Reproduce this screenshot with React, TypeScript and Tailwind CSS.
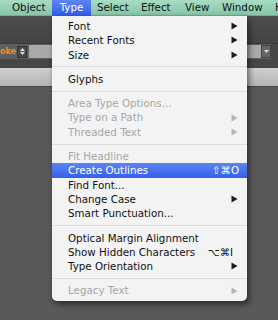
import React from "react";

type Item =
  | { kind: "sep" }
  | { kind: "item"; label: string; disabled?: boolean; arrow?: boolean; shortcut?: string; active?: boolean; scPad?: string };

const items: Item[] = [
  { kind: "item", label: "Font", arrow: true },
  { kind: "item", label: "Recent Fonts", arrow: true },
  { kind: "item", label: "Size", arrow: true },
  { kind: "sep" },
  { kind: "item", label: "Glyphs" },
  { kind: "sep" },
  { kind: "item", label: "Area Type Options...", disabled: true },
  { kind: "item", label: "Type on a Path", disabled: true, arrow: true },
  { kind: "item", label: "Threaded Text", disabled: true, arrow: true },
  { kind: "sep" },
  { kind: "item", label: "Fit Headline", disabled: true },
  { kind: "item", label: "Create Outlines", active: true, shortcut: "⇧⌘O" },
  { kind: "item", label: "Find Font..." },
  { kind: "item", label: "Change Case", arrow: true },
  { kind: "item", label: "Smart Punctuation..." },
  { kind: "sep" },
  { kind: "item", label: "Optical Margin Alignment" },
  { kind: "item", label: "Show Hidden Characters", shortcut: "⌥⌘I", scPad: "pr-[14px]" },
  { kind: "item", label: "Type Orientation", arrow: true },
  { kind: "sep" },
  { kind: "item", label: "Legacy Text", disabled: true, arrow: true },
];

function Arrow({ color }: { color: string }) {
  return (
    <svg width="7" height="8" viewBox="0 0 7 8">
      <polygon points="0.5,0.5 6.5,4 0.5,7.5" fill={color} />
    </svg>
  );
}

export default function App() {
  return (
    <div
      className="relative w-[278px] h-[320px] overflow-hidden bg-[#595959]"
      style={{ fontFamily: '"DejaVu Sans", sans-serif' }}
    >
      {/* menu bar */}
      <div className="h-[16px] flex items-center text-[10.3px] text-[#111] bg-gradient-to-b from-[#a8dcc3] to-[#86c6a8] border-b border-[#6fae91] whitespace-nowrap">
        <span className="shrink-0 ml-[12px] w-[40px]">Object</span>
        <span className="shrink-0 h-[16px] w-[39px] flex items-center justify-center text-white bg-gradient-to-b from-[#5f86f6] to-[#2f5ae6]">Type</span>
        <span className="shrink-0 ml-[6px] w-[44px]">Select</span>
        <span className="shrink-0 w-[44px]">Effect</span>
        <span className="shrink-0 w-[37px]">View</span>
        <span className="shrink-0 w-[53px]">Window</span>
        <span className="shrink-0">Help</span>
      </div>
      {/* dark toolbar */}
      <div className="h-[27px] bg-gradient-to-b from-[#4d4d4d] to-[#434343]" />
      {/* control bar */}
      <div className="h-[16px] bg-[#5e5e5e] flex items-center border-t border-[#3a3a3a]">
        <span className="shrink-0 text-[8px] leading-none text-[#e8902c] w-[16px] font-bold">oke:</span>
        <div className="shrink-0 ml-[1px] w-[10px] h-[12px] bg-[#4a4a4a] border border-[#333] flex flex-col items-center justify-center gap-[1px]">
          <svg width="5" height="3" viewBox="0 0 5 3"><polygon points="0,3 2.5,0 5,3" fill="#ddd" /></svg>
          <svg width="5" height="3" viewBox="0 0 5 3"><polygon points="0,0 2.5,3 5,0" fill="#ddd" /></svg>
        </div>
        <div className="shrink-0 ml-[2px] w-[232px] h-[13px] bg-[#a9a9a9]" />
        <div className="shrink-0 w-[10px] h-[13px] bg-[#666] border border-[#444] flex items-center justify-center">
          <svg width="5" height="3" viewBox="0 0 5 3"><polygon points="0,0 2.5,3 5,0" fill="#ddd" /></svg>
        </div>
        <div className="flex-1 h-[16px] bg-[#474747]" />
      </div>
      <div className="h-[9px] bg-[#464646]" />
      <div className="h-[19px] bg-gradient-to-b from-[#cfcfcf] to-[#b4b4b4] border-b border-[#444]" />

      {/* dropdown menu */}
      <div className="absolute left-[52px] top-[16px] w-[195px] h-[285px] bg-[#f3f3f3] rounded-b-[5px] shadow-[2px_3px_6px_rgba(0,0,0,0.55)] pt-[3px] text-[10.3px] whitespace-nowrap">
        {items.map((it, i) =>
          it.kind === "sep" ? (
            <div key={i} className="h-[10px] flex items-center">
              <div className="w-full h-px bg-[#dcdcdc]" />
            </div>
          ) : (
            <div
              key={i}
              className={
                "h-[14.3px] flex items-center pl-[16px] " +
                (it.active
                  ? "bg-gradient-to-b from-[#5d84f5] to-[#355fe8] text-white"
                  : it.disabled
                  ? "text-[#a6a6a6]"
                  : "text-[#111]")
              }
            >
              <span className="flex-1 leading-none">{it.label}</span>
              {it.shortcut && (
                <span className={"leading-none " + (it.scPad ?? "pr-[8px]")}>{it.shortcut}</span>
              )}
              {it.arrow && (
                <span className="pr-[9px] flex items-center">
                  <Arrow color={it.disabled ? "#b5b5b5" : "#1a1a1a"} />
                </span>
              )}
            </div>
          )
        )}
      </div>
    </div>
  );
}
